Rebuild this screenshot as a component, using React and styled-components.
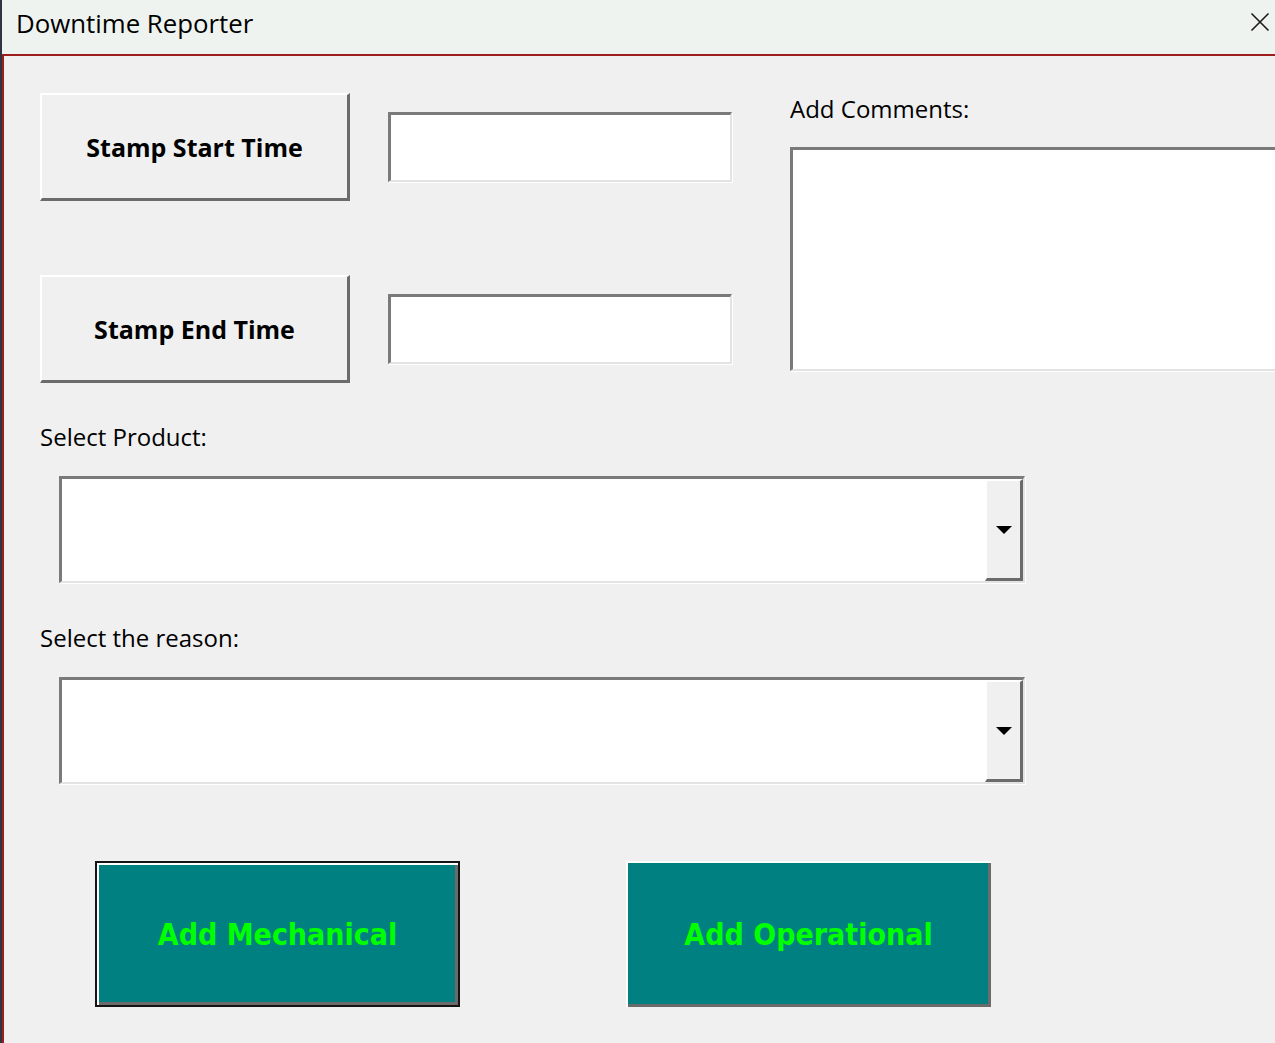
import React from 'react';
import styled, { createGlobalStyle } from 'styled-components';

const Global = createGlobalStyle`
    html, body {
        margin: 0;
        padding: 0;
        background: #2f3440;
    }
    #root {
        min-height: 100vh;
    }
`;

function CloseIcon() {
    return (
        <svg width="20" height="20" viewBox="0 0 20 20">
            <path d="M1.5 1.5 L18.5 18.5 M18.5 1.5 L1.5 18.5" stroke="#1a1a1a" strokeWidth="1.6" fill="none" />
        </svg>
    );
}

function Combo() {
    return (
        <ComboBox>
            <ComboField />
            <DropButton>
                <svg width="16" height="8" viewBox="0 0 16 8">
                    <path d="M0 0 L16 0 L8 8 Z" fill="#000" />
                </svg>
            </DropButton>
        </ComboBox>
    );
}

function App() {
    return (
        <>
            <Global />
            <Window>
                <TitleBar>
                    <Title>Downtime Reporter</Title>
                    <CloseButton><CloseIcon /></CloseButton>
                </TitleBar>
                <Body>
                    <TopSection>
                        <StampGrid>
                            <StampButton>Stamp Start Time</StampButton>
                            <TextBox />
                            <StampButton>Stamp End Time</StampButton>
                            <TextBox />
                        </StampGrid>
                        <Comments>
                            <Label>Add Comments:</Label>
                            <CommentBox />
                        </Comments>
                    </TopSection>

                    <Field $gap={39}>
                        <Label>Select Product:</Label>
                        <Combo />
                    </Field>

                    <Field $gap={40}>
                        <Label>Select the reason:</Label>
                        <Combo />
                    </Field>

                    <Actions>
                        <ActionButton $focused>Add Mechanical</ActionButton>
                        <ActionButton>Add Operational</ActionButton>
                    </Actions>
                </Body>
            </Window>
        </>
    );
}

export default App;


const Window = styled.div`
    margin-left: 2px;
    min-height: 100vh;
    display: flex;
    flex-direction: column;
    font-family: "Open Sans", "Noto Sans", sans-serif;
    color: #000;
    overflow: hidden;
`;

const TitleBar = styled.div`
    height: 54px;
    background: #eff3ef;
    display: flex;
    align-items: flex-start;
    justify-content: space-between;
    padding: 0 5px 0 14px;
`;

const Title = styled.div`
    font-size: 25.8px;
    line-height: 34px;
    padding-top: 6px;
`;

const CloseButton = styled.div`
    padding-top: 12px;
    width: 20px;
    height: 20px;
`;

const Body = styled.div`
    flex: 1;
    background: #f0f0f0;
    border-top: 2px solid #9d1d1d;
    border-left: 2px solid #9d1d1d;
    padding: 37px 0 0 36px;
    display: flex;
    flex-direction: column;
`;

const TopSection = styled.div`
    display: flex;
    align-items: flex-start;
    gap: 58px;
`;

const StampGrid = styled.div`
    display: grid;
    grid-template-columns: 310px 344px;
    grid-auto-rows: 108px;
    column-gap: 38px;
    row-gap: 74px;
    align-items: center;
`;

const StampButton = styled.div`
    box-sizing: border-box;
    height: 108px;
    background: #f0f0f0;
    border-style: solid;
    border-width: 2px 3px 3px 2px;
    border-color: #ffffff #6b6b6b #6b6b6b #ffffff;
    display: flex;
    align-items: center;
    justify-content: center;
    font-size: 25px;
    font-weight: 700;
`;

const TextBox = styled.div`
    box-sizing: border-box;
    height: 70px;
    background: #ffffff;
    border-style: solid;
    border-width: 3px 2px 2px 3px;
    border-color: #7a7a7a #e3e3e3 #e3e3e3 #7a7a7a;
    box-shadow: 1px 1px 0 #ffffff;
`;

const Comments = styled.div`
    display: flex;
    flex-direction: column;
    gap: 23px;
    margin-top: 1px;
`;

const Label = styled.div`
    font-size: 24px;
    line-height: 30px;
`;

const CommentBox = styled(TextBox)`
    width: 520px;
    height: 224px;
`;

const Field = styled.div`
    display: flex;
    flex-direction: column;
    gap: 24px;
    margin-top: ${props => props.$gap}px;
`;

const ComboBox = styled.div`
    box-sizing: border-box;
    margin-left: 19px;
    width: 966px;
    height: 107px;
    display: flex;
    background: #ffffff;
    border-style: solid;
    border-width: 3px 2px 2px 3px;
    border-color: #7a7a7a #e3e3e3 #e3e3e3 #7a7a7a;
    box-shadow: 1px 1px 0 #ffffff;
`;

const ComboField = styled.div`
    flex: 1;
`;

const DropButton = styled.div`
    box-sizing: border-box;
    width: 38px;
    background: #f0f0f0;
    border-style: solid;
    border-width: 2px 3px 3px 2px;
    border-color: #ffffff #6b6b6b #6b6b6b #ffffff;
    display: flex;
    align-items: center;
    justify-content: center;
`;

const Actions = styled.div`
    display: flex;
    gap: 166px;
    margin: 77px 0 0 55px;
`;

const ActionButton = styled.div`
    box-sizing: border-box;
    width: 365px;
    height: 146px;
    background: #008080;
    border: ${props => props.$focused ? '2px solid #141414' : 'none'};
    box-shadow: inset 2px 2px 0 #ffffff, inset -3px -3px 0 #6b6b6b;
    display: flex;
    align-items: center;
    justify-content: center;
    color: #00ff00;
    font-family: "DejaVu Sans Condensed", "DejaVu Sans", "Liberation Sans", sans-serif;
    font-stretch: condensed;
    font-weight: 700;
    font-size: 30px;
`;
